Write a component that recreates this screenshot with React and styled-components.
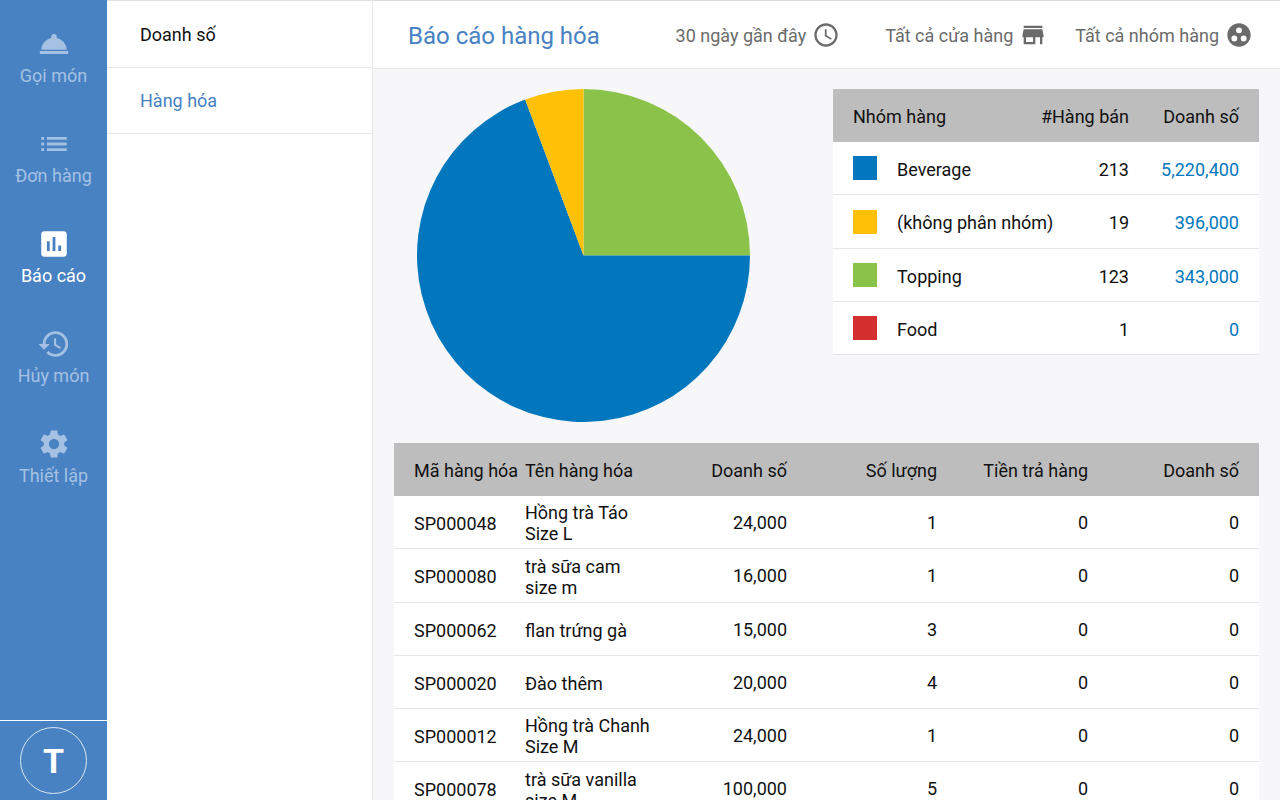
import { useState } from "react";
import styled, { createGlobalStyle } from "styled-components";
import {
  MdRoomService,
  MdList,
  MdAssessment,
  MdHistory,
  MdSettings,
  MdAccessTime,
  MdStore,
  MdGroupWork,
} from "react-icons/md";

const GlobalStyle = createGlobalStyle`
  * {
    box-sizing: border-box;
  }

  body {
    margin: 0;
    font-family: Roboto, "Noto Sans", sans-serif;
    font-size: 18px;
    line-height: 21px;
    color: #111;
  }

  button {
    font: inherit;
    border: none;
    background: none;
    padding: 0;
    cursor: pointer;
  }
`;

const Shell = styled.div`
  display: flex;
  height: 100vh;
  overflow: hidden;
  background-color: #f7f7f9;
`;

const Sidebar = styled.nav`
  flex: 0 0 107px;
  display: flex;
  flex-direction: column;
  background-color: #4882c3;
`;

const SideLink = styled.a`
  height: 100px;
  padding-top: 27px;
  display: flex;
  flex-direction: column;
  align-items: center;
  gap: 4px;
  white-space: nowrap;
  text-decoration: none;
  color: ${(props) => (props.$active ? "#fff" : "#a4c1e3")};
`;

const Account = styled.div`
  margin-top: auto;
  padding: 6px 0;
  display: flex;
  justify-content: center;
  border-top: 1px solid #fff;
`;

const Avatar = styled.button`
  width: 67px;
  height: 67px;
  border-radius: 50%;

  && {
    border: 1px solid #dbe6f3;
    padding-top: 2px;
    color: #fff;
    font-size: 34px;
    font-weight: bold;
  }
`;

const Menu = styled.aside`
  flex: 0 0 266px;
  background-color: #fff;
  border-top: 1px solid #e0e0e0;
  border-right: 1px solid #e6e6e6;
`;

const MenuLink = styled.a`
  display: flex;
  align-items: center;
  height: 66px;
  padding-left: 33px;
  border-bottom: 1px solid #e8e8e8;
  text-decoration: none;
  color: ${(props) => (props.$active ? "#4882c3" : "#111")};

  &:first-child {
    height: 67px;
  }
`;

const Main = styled.main`
  flex: 1;
  min-width: 0;
  display: flex;
  flex-direction: column;
`;

const Header = styled.header`
  flex: 0 0 69px;
  display: flex;
  align-items: center;
  justify-content: space-between;
  padding: 0 27px 0 35px;
  background-color: #fff;
  border-top: 1px solid #d9d9d9;
  border-bottom: 1px solid #e8e8e8;
`;

const Title = styled.h1`
  margin: 0;
  padding-top: 2px;
  font-size: 24px;
  line-height: 28px;
  font-weight: normal;
  color: #4882c3;
`;

const Filters = styled.div`
  display: flex;
  gap: 28px;
`;

const Filter = styled.button`
  display: flex;
  align-items: center;
  gap: 6px;
  white-space: nowrap;
  color: #6b6b6b;

  &:first-child {
    margin-right: 17px;
  }
`;

const FilterLabel = styled.span`
  padding-top: 2px;
`;

const Content = styled.div`
  flex: 1;
  min-height: 0;
  padding: 20px 21px;
  overflow-y: auto;
  scrollbar-width: none;
`;

const Overview = styled.section`
  display: flex;
  align-items: flex-start;
  justify-content: space-between;
  padding-left: 23px;
  margin-bottom: 21px;
`;

const Table = styled.table`
  width: ${(props) => props.$width || "100%"};
  table-layout: fixed;
  border-collapse: separate;
  border-spacing: 0;
  background-color: #fff;

  thead tr {
    height: 53px;
    background-color: #bdbdbd;
  }

  tbody tr {
    height: 53px;
  }

  tbody tr:nth-child(4n + 2) {
    height: 54px;
  }

  tbody td {
    border-bottom: 1px solid #e6e6e6;
  }
`;

const Th = styled.th`
  width: ${(props) => props.$width || "auto"};
  padding: 2px 0 0;
  font-weight: normal;
  white-space: nowrap;
  text-align: ${(props) => (props.$num ? "right" : "left")};

  &:first-child {
    padding-left: 20px;
  }

  &:last-child {
    padding-right: 20px;
  }
`;

const Td = styled.td`
  padding: ${(props) => (props.$flush ? "0" : "2px 0 0")};
  text-align: ${(props) => (props.$num ? "right" : "left")};
  color: ${(props) => (props.$accent ? "#0277bd" : "inherit")};

  &:first-child {
    padding-left: 20px;
  }

  &:last-child {
    padding-right: 20px;
  }
`;

const Group = styled.div`
  display: flex;
  align-items: center;
  gap: 20px;
  white-space: nowrap;
`;

const Swatch = styled.span`
  flex: 0 0 24px;
  height: 24px;
  margin-bottom: 2px;
  background-color: ${(props) => props.$color};
`;

const links = [
  { label: "Gọi món", Icon: MdRoomService },
  { label: "Đơn hàng", Icon: MdList },
  { label: "Báo cáo", Icon: MdAssessment },
  { label: "Hủy món", Icon: MdHistory },
  { label: "Thiết lập", Icon: MdSettings },
];

const filters = [
  { label: "30 ngày gần đây", Icon: MdAccessTime },
  { label: "Tất cả cửa hàng", Icon: MdStore },
  { label: "Tất cả nhóm hàng", Icon: MdGroupWork },
];

const groups = [
  { name: "Beverage", color: "#0277bd", sold: "213", total: "5,220,400" },
  { name: "(không phân nhóm)", color: "#ffc107", sold: "19", total: "396,000" },
  { name: "Topping", color: "#8bc34a", sold: "123", total: "343,000" },
  { name: "Food", color: "#d32f2f", sold: "1", total: "0" },
];

const products = [
  ["SP000048", "Hồng trà Táo Size L", "24,000", "1", "0", "0"],
  ["SP000080", "trà sữa cam size m", "16,000", "1", "0", "0"],
  ["SP000062", "flan trứng gà", "15,000", "3", "0", "0"],
  ["SP000020", "Đào thêm", "20,000", "4", "0", "0"],
  ["SP000012", "Hồng trà Chanh Size M", "24,000", "1", "0", "0"],
  ["SP000078", "trà sữa vanilla size M", "100,000", "5", "0", "0"],
];

// slices in degrees, clockwise from 12 o'clock
const slices = [
  { from: 0, to: 90, color: "#8bc34a" },
  { from: 90, to: 339.5, color: "#0277bd" },
  { from: 339.5, to: 360, color: "#ffc107" },
];

function point(deg, r) {
  const a = ((deg - 90) * Math.PI) / 180;
  return `${r + r * Math.cos(a)} ${r + r * Math.sin(a)}`;
}

function Pie({ size }) {
  const r = size / 2;
  return (
    <svg
      width={size}
      height={size}
      viewBox={`0 0 ${size} ${size}`}
      role="img"
      aria-label="Doanh số"
    >
      {slices.map((s) => (
        <path
          key={s.color}
          fill={s.color}
          d={`M${r} ${r} L${point(s.from, r)} A${r} ${r} 0 ${
            s.to - s.from > 180 ? 1 : 0
          } 1 ${point(s.to, r)} Z`}
        />
      ))}
    </svg>
  );
}

function App() {
  const [page, setPage] = useState("Báo cáo");
  const [report, setReport] = useState("Hàng hóa");

  return (
    <Shell>
      <GlobalStyle />
      <Sidebar>
        {links.map(({ label, Icon }) => (
          <SideLink
            key={label}
            href="#"
            $active={label === page}
            onClick={() => setPage(label)}
          >
            <Icon size={34} />
            {label}
          </SideLink>
        ))}
        <Account>
          <Avatar>T</Avatar>
        </Account>
      </Sidebar>
      <Menu>
        {["Doanh số", "Hàng hóa"].map((label) => (
          <MenuLink
            key={label}
            href="#"
            $active={label === report}
            onClick={() => setReport(label)}
          >
            {label}
          </MenuLink>
        ))}
      </Menu>
      <Main>
        <Header>
          <Title>Báo cáo hàng hóa</Title>
          <Filters>
            {filters.map(({ label, Icon }) => (
              <Filter key={label}>
                <FilterLabel>{label}</FilterLabel>
                <Icon size={28} />
              </Filter>
            ))}
          </Filters>
        </Header>
        <Content>
          <Overview>
            <Pie size={333} />
            <Table $width="426px">
              <thead>
                <tr>
                  <Th>Nhóm hàng</Th>
                  <Th $num $width="90px">#Hàng bán</Th>
                  <Th $num $width="130px">Doanh số</Th>
                </tr>
              </thead>
              <tbody>
                {groups.map((g) => (
                  <tr key={g.name}>
                    <Td>
                      <Group>
                        <Swatch $color={g.color} />
                        {g.name}
                      </Group>
                    </Td>
                    <Td $num>{g.sold}</Td>
                    <Td $num $accent>{g.total}</Td>
                  </tr>
                ))}
              </tbody>
            </Table>
          </Overview>
          <Table>
            <thead>
              <tr>
                <Th $width="131px">Mã hàng hóa</Th>
                <Th>Tên hàng hóa</Th>
                <Th $num $width="131px">Doanh số</Th>
                <Th $num $width="150px">Số lượng</Th>
                <Th $num $width="151px">Tiền trả hàng</Th>
                <Th $num $width="171px">Doanh số</Th>
              </tr>
            </thead>
            <tbody>
              {products.map(([code, name, ...numbers]) => (
                <tr key={code}>
                  <Td>{code}</Td>
                  <Td>{name}</Td>
                  {numbers.map((n, i) => (
                    <Td key={i} $num $flush>{n}</Td>
                  ))}
                </tr>
              ))}
            </tbody>
          </Table>
        </Content>
      </Main>
    </Shell>
  );
}

export default App;
